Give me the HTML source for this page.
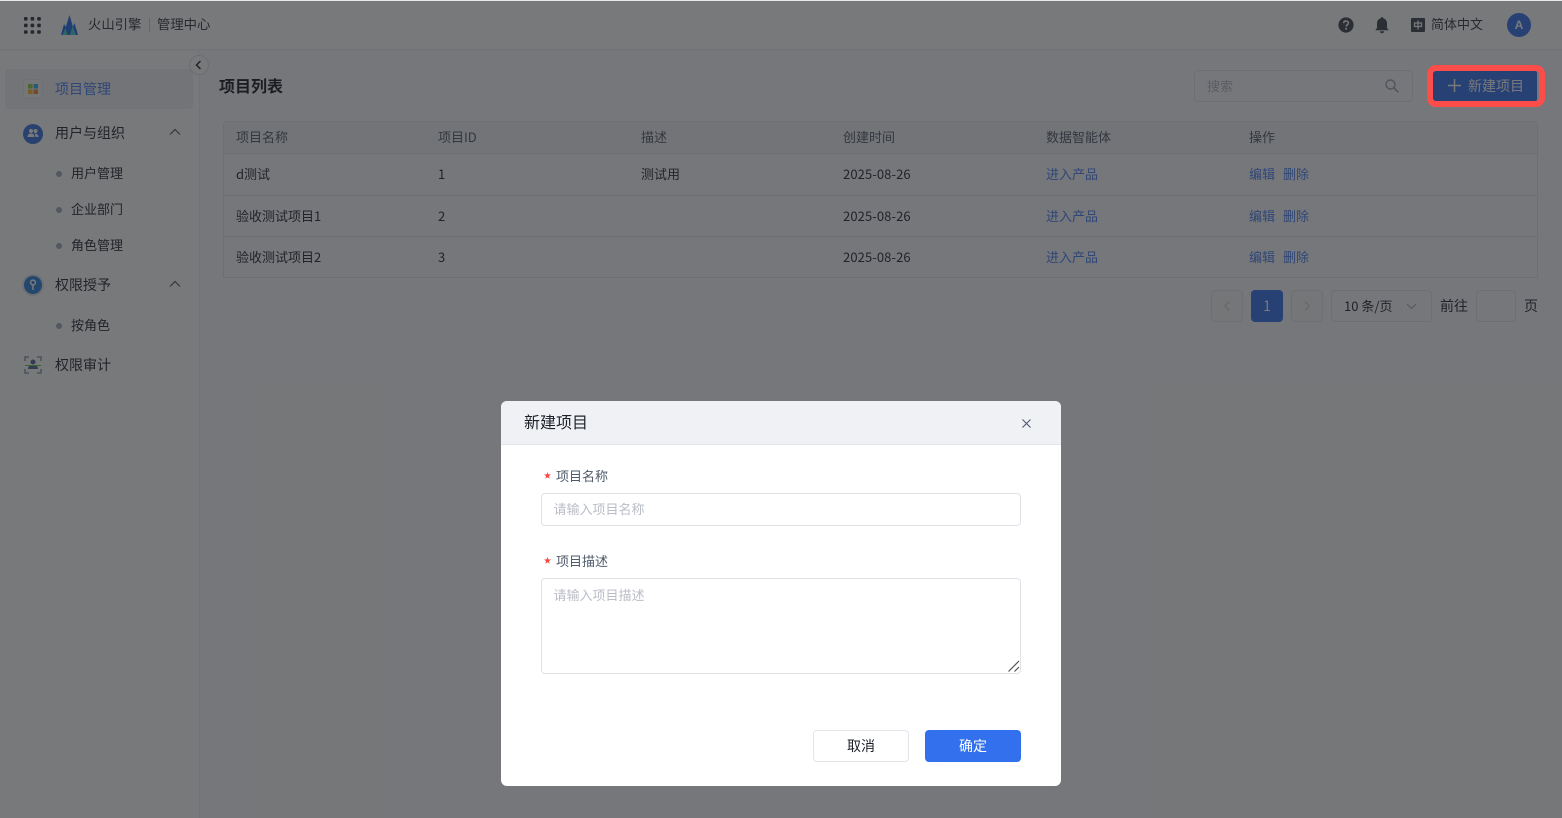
<!DOCTYPE html>
<html lang="zh-CN">
<head>
<meta charset="utf-8">
<title>项目列表</title>
<style>
*{box-sizing:border-box}
html,body{margin:0;padding:0}
body{width:1562px;height:818px;overflow:hidden;position:relative;background:#fafbfc;font-family:"Noto Sans CJK SC","Liberation Sans",sans-serif;font-size:13px;color:#2b2f38}
.a{position:absolute}
.t{position:absolute;line-height:20px;white-space:nowrap}
.s{font-size:14px}
.dot{position:absolute;left:56px;width:6px;height:6px;border-radius:50%;background:#a9afbd}
.link{color:#4f84f5}
.th{color:#59606e}
.line{position:absolute;left:224px;width:1313px;height:1px;background:#e2e4ea}
.pg{position:absolute;top:290px;height:32px;border:1px solid #e5e6eb;border-radius:4px;background:#fafbfc}
.mask{position:absolute;inset:0;background:rgba(26,27,30,.59)}
.modal{position:absolute;left:501px;top:401px;width:560px;height:385px;background:#fff;border-radius:6px;overflow:hidden}
.field{position:absolute;left:40px;width:480px;border:1px solid #e0e2e8;border-radius:4px;background:#fff}
</style>
</head>
<body>
<!-- top bar -->
<div class="a" style="left:0;top:0;width:1562px;height:50px;background:#fff;border-bottom:1px solid #eceef2"></div>
<svg class="a" style="left:24px;top:17px" width="17" height="17" viewBox="0 0 17 17" fill="#333842">
<rect x="0" y="0" width="3.6" height="3.6" rx="1"/><rect x="6.6" y="0" width="3.6" height="3.6" rx="1"/><rect x="13.2" y="0" width="3.6" height="3.6" rx="1"/>
<rect x="0" y="6.6" width="3.6" height="3.6" rx="1"/><rect x="6.6" y="6.6" width="3.6" height="3.6" rx="1"/><rect x="13.2" y="6.6" width="3.6" height="3.6" rx="1"/>
<rect x="0" y="13.2" width="3.6" height="3.6" rx="1"/><rect x="6.6" y="13.2" width="3.6" height="3.6" rx="1"/><rect x="13.2" y="13.2" width="3.6" height="3.6" rx="1"/></svg>
<svg class="a" style="left:61px;top:15px" width="17" height="20" viewBox="0 0 17 20">
<path d="M0 20 L3 9 L4.800 12 L8.500 0 L12 12 L13.500 8 L17 20Z" fill="#2a70e8"/>
<path d="M1.500 20 L4.500 13 L6.500 20Z M9 20 L11.500 11 L15 20Z" fill="#4fd0c4"/></svg>
<div class="t" style="left:88px;top:14px;font-size:13.33px;color:#3a3e48">火山引擎</div>
<div class="a" style="left:149px;top:18px;width:1px;height:14px;background:#d0d3da"></div>
<div class="t" style="left:157px;top:14px;font-size:13.33px;color:#3a3e48">管理中心</div>
<svg class="a" style="left:1338px;top:17px" width="16" height="16" viewBox="0 0 16 16"><circle cx="8" cy="8" r="7.6" fill="#454a55"/><path d="M5.6 6.200C5.700 4.800 6.700 4 8 4c1.400 0 2.400.8 2.400 2.100 0 1.800-2.300 1.800-2.300 3.500" fill="none" stroke="#fff" stroke-width="1.500"/><circle cx="8.100" cy="11.800" r="1" fill="#fff"/></svg>
<svg class="a" style="left:1375px;top:17px" width="14" height="17" viewBox="0 0 14 17" fill="#454a55"><path d="M7 0c.7 0 1.200.5 1.200 1.200C10.600 1.800 12 3.800 12 6.300V11l1.700 2.300H.3L2 11V6.300C2 3.800 3.400 1.800 5.800 1.200 5.800.5 6.300 0 7 0Z"/><path d="M5 14.300h4C9 15.500 8.100 16.300 7 16.300s-2-.8-2-2Z"/></svg>
<svg class="a" style="left:1411px;top:18px" width="14" height="14" viewBox="0 0 14 14"><rect width="14" height="14" rx="1" fill="#454a55"/><path d="M7 2.500v9M3.500 5h7v3.500h-7Z" fill="none" stroke="#fff" stroke-width="1.300"/></svg>
<div class="t" style="left:1431px;top:14px;color:#3a3e48">简体中文</div>
<div class="a" style="left:1507px;top:13px;width:24px;height:24px;border-radius:50%;background:#3a78ee;color:#fff;text-align:center;font:bold 12px/24px 'Liberation Sans',sans-serif">A</div>

<!-- sidebar -->
<div class="a" style="left:0;top:51px;width:200px;height:767px;background:#fff;border-right:1px solid #f0f1f4"></div>
<div class="a" style="left:5px;top:69px;width:188px;height:40px;border-radius:4px;background:#f0f3f6"></div>
<div class="a" style="left:23px;top:79px;width:20px;height:20px;border-radius:3px;background:#f8f8f8;border:1px solid #e6e8ee"></div>
<svg class="a" style="left:28px;top:84px" width="10" height="10" viewBox="0 0 10 10"><rect width="4.500" height="4.500" fill="#8fd14a"/><rect x="5.500" width="4.500" height="4.500" fill="#3fb5f0"/><rect y="5.500" width="4.500" height="4.500" fill="#f7bd3c"/><rect x="5.500" y="5.500" width="4.500" height="4.500" fill="#f58a3c"/></svg>
<div class="t s" style="left:55px;top:79px;color:#4f84f5">项目管理</div>

<div class="a" style="left:23px;top:124px;width:20px;height:20px;border-radius:50%;background:#3f78e2"></div>
<svg class="a" style="left:27px;top:128px" width="12" height="11" viewBox="0 0 12 11" fill="#fff"><circle cx="4" cy="3" r="2"/><circle cx="8.500" cy="3" r="2"/><path d="M.5 9c0-2.200 1.500-3.500 3.500-3.500S7.500 6.800 7.500 9Z"/><path d="M8.500 9c0-1.500-.4-2.500-1.200-3.300 2.300-.6 4.200 1 4.200 3.300Z"/></svg>
<div class="t s" style="left:55px;top:123px">用户与组织</div>
<svg class="a" style="left:169px;top:128px" width="12" height="8" viewBox="0 0 12 8"><path d="M1 6.500 6 1.500 11 6.500" fill="none" stroke="#59606e" stroke-width="1.200"/></svg>
<div class="dot" style="top:171px"></div><div class="t" style="left:71px;top:163px">用户管理</div>
<div class="dot" style="top:207px"></div><div class="t" style="left:71px;top:199px">企业部门</div>
<div class="dot" style="top:243px"></div><div class="t" style="left:71px;top:235px">角色管理</div>

<div class="a" style="left:24px;top:276px;width:18px;height:18px;border-radius:50%;background:#3585e0;box-shadow:0 0 0 2px #e4e6ec"></div>
<svg class="a" style="left:29px;top:279px" width="8" height="12" viewBox="0 0 8 12"><circle cx="4" cy="3.500" r="2.400" fill="none" stroke="#fff" stroke-width="1.500"/><path d="M4 6v5" stroke="#fff" stroke-width="1.500"/></svg>
<div class="t s" style="left:55px;top:275px">权限授予</div>
<svg class="a" style="left:169px;top:280px" width="12" height="8" viewBox="0 0 12 8"><path d="M1 6.500 6 1.500 11 6.500" fill="none" stroke="#59606e" stroke-width="1.200"/></svg>
<div class="dot" style="top:323px"></div><div class="t" style="left:71px;top:315px">按角色</div>

<svg class="a" style="left:24px;top:356px" width="18" height="18" viewBox="0 0 18 18"><path d="M1 5V1h4M13 1h4v4M17 13v4h-4M5 17H1v-4" fill="none" stroke="#98a2b3" stroke-width="1.600"/><circle cx="9" cy="6" r="2.500" fill="#5c6f96"/><path d="M4 13c0-3 2-4 5-4s5 1 5 4Z" fill="#5c6f96"/><path d="M1 9.500h16" stroke="#5ed24e" stroke-width="1"/></svg>
<div class="t s" style="left:55px;top:355px">权限审计</div>

<!-- collapse -->
<div class="a" style="left:189px;top:55px;width:20px;height:20px;border-radius:50%;background:#fff;border:1px solid #dfe2e8"></div>
<svg class="a" style="left:195px;top:60px" width="7" height="10" viewBox="0 0 7 10"><path d="M5.500 1 1.500 5l4 4" fill="none" stroke="#2b2f38" stroke-width="1.500"/></svg>

<!-- header -->
<div class="t" style="left:219px;top:75px;font-size:16px;font-weight:700;color:#1d2129">项目列表</div>
<div class="a" style="left:1194px;top:70px;width:219px;height:32px;border:1px solid #e5e6eb;border-radius:4px;background:#fafbfc"></div>
<div class="t" style="left:1207px;top:76px;color:#b5b9c2">搜索</div>
<svg class="a" style="left:1385px;top:79px" width="14" height="14" viewBox="0 0 14 14"><circle cx="5.500" cy="5.500" r="4.500" fill="none" stroke="#a0a5b0" stroke-width="1.400"/><path d="M9 9l4.300 4.300" stroke="#a0a5b0" stroke-width="1.600"/></svg>
<div class="a" style="left:1433px;top:71px;width:104px;height:30px;background:#3a78ee;border-radius:2px"></div>
<svg class="a" style="left:1448px;top:79px" width="13" height="13" viewBox="0 0 13 13"><path d="M6.500 0v13M0 6.500h13" stroke="#fff" stroke-width="1.500"/></svg>
<div class="t s" style="left:1468px;top:76px;color:#fff">新建项目</div>

<!-- table -->
<div class="a" style="left:223px;top:121px;width:1315px;height:157px;background:#fafbfc;border:1px solid #e5e6eb;border-radius:4px 4px 0 0"></div>
<div class="a" style="left:224px;top:122px;width:1313px;height:32px;background:#f1f3f5;border-radius:3px 3px 0 0"></div>
<div class="line" style="top:153px"></div>
<div class="line" style="top:195px"></div>
<div class="line" style="top:236px"></div>

<div class="t th" style="left:236px;top:127px">项目名称</div>
<div class="t th" style="left:438px;top:127px">项目ID</div>
<div class="t th" style="left:641px;top:127px">描述</div>
<div class="t th" style="left:843px;top:127px">创建时间</div>
<div class="t th" style="left:1046px;top:127px">数据智能体</div>
<div class="t th" style="left:1249px;top:127px">操作</div>

<div class="t" style="left:236px;top:164px">d测试</div>
<div class="t" style="left:438px;top:164px">1</div>
<div class="t" style="left:641px;top:164px">测试用</div>
<div class="t" style="left:843px;top:164px;letter-spacing:.1px">2025-08-26</div>
<div class="t link" style="left:1046px;top:164px">进入产品</div>
<div class="t link" style="left:1249px;top:164px">编辑</div>
<div class="t link" style="left:1283px;top:164px">删除</div>

<div class="t" style="left:236px;top:206px">验收测试项目1</div>
<div class="t" style="left:438px;top:206px">2</div>
<div class="t" style="left:843px;top:206px;letter-spacing:.1px">2025-08-26</div>
<div class="t link" style="left:1046px;top:206px">进入产品</div>
<div class="t link" style="left:1249px;top:206px">编辑</div>
<div class="t link" style="left:1283px;top:206px">删除</div>

<div class="t" style="left:236px;top:247px">验收测试项目2</div>
<div class="t" style="left:438px;top:247px">3</div>
<div class="t" style="left:843px;top:247px;letter-spacing:.1px">2025-08-26</div>
<div class="t link" style="left:1046px;top:247px">进入产品</div>
<div class="t link" style="left:1249px;top:247px">编辑</div>
<div class="t link" style="left:1283px;top:247px">删除</div>

<!-- pagination -->
<div class="pg" style="left:1211px;width:32px;background:#f6f7f8"></div>
<svg class="a" style="left:1224px;top:301px" width="6" height="10" viewBox="0 0 6 10"><path d="M5 .5.800 5 5 9.500" fill="none" stroke="#c9cdd4"/></svg>
<div class="a" style="left:1251px;top:290px;width:32px;height:32px;border-radius:4px;background:#3a78ee;color:#fff;text-align:center;line-height:32px;font-size:14px">1</div>
<div class="pg" style="left:1291px;width:32px;background:#f6f7f8"></div>
<svg class="a" style="left:1304px;top:301px" width="6" height="10" viewBox="0 0 6 10"><path d="M1 .5 5.200 5 1 9.500" fill="none" stroke="#c9cdd4"/></svg>
<div class="pg" style="left:1331px;width:101px"></div>
<div class="t" style="left:1344px;top:296px">10 条/页</div>
<svg class="a" style="left:1406px;top:303px" width="11" height="7" viewBox="0 0 11 7"><path d="M1 1l4.500 4.500L10 1" fill="none" stroke="#a9aeb8"/></svg>
<div class="t s" style="left:1440px;top:296px">前往</div>
<div class="pg" style="left:1476px;width:40px"></div>
<div class="t s" style="left:1524px;top:296px">页</div>

<div class="mask"></div>
<div class="a" style="left:0;top:0;width:1562px;height:1px;background:#e8e8e8"></div>

<!-- red highlight above mask -->
<div class="a" style="left:1427px;top:65px;width:118px;height:42px;border:6px solid #fb4e4b;border-radius:9px"></div>

<!-- modal -->
<div class="modal">
  <div class="a" style="left:0;top:0;width:560px;height:44px;background:#f0f1f5;border-bottom:1px solid #e3e5ea"></div>
  <div class="t" style="left:23px;top:10px;font-size:16px;line-height:20px;color:#1d2129">新建项目</div>
  <svg class="a" style="left:521px;top:18px" width="9" height="9" viewBox="0 0 9 9"><path d="M.5.500l8 8M8.500.500l-8 8" stroke="#4e5969" stroke-width="1.100"/></svg>

  <svg class="a" style="left:43px;top:71px" width="7" height="7" viewBox="0 0 10 10"><path d="M5 0 6.300 3.400 10 3.600 7.100 5.900 8.100 9.500 5 7.500 1.900 9.500 2.900 5.900 0 3.600 3.700 3.400Z" fill="#f54a45"/></svg>
  <div class="t" style="left:55px;top:65px;color:#4e5969">项目名称</div>
  <div class="field" style="top:92px;height:33px"></div>
  <div class="t" style="left:52.500px;top:98px;color:#b9bdc6">请输入项目名称</div>

  <svg class="a" style="left:43px;top:156px" width="7" height="7" viewBox="0 0 10 10"><path d="M5 0 6.300 3.400 10 3.600 7.100 5.900 8.100 9.500 5 7.500 1.900 9.500 2.900 5.900 0 3.600 3.700 3.400Z" fill="#f54a45"/></svg>
  <div class="t" style="left:55px;top:150px;color:#4e5969">项目描述</div>
  <div class="field" style="top:177px;height:96px"></div>
  <div class="t" style="left:52.500px;top:184px;color:#b9bdc6">请输入项目描述</div>
  <svg class="a" style="left:507px;top:259px" width="12" height="12" viewBox="0 0 12 12"><path d="M.5 11.500 11 1M6.500 11.500 11 7" stroke="#555" stroke-width="1.200"/></svg>

  <div class="a" style="left:312px;top:329px;width:96px;height:32px;border:1px solid #e3e5ea;border-radius:4px;background:#fff;text-align:center;line-height:31px;font-size:14px;color:#1d2129">取消</div>
  <div class="a" style="left:424px;top:329px;width:96px;height:32px;border-radius:4px;background:#3270ee;text-align:center;line-height:33px;font-size:14px;color:#fff">确定</div>
</div>
</body>
</html>
